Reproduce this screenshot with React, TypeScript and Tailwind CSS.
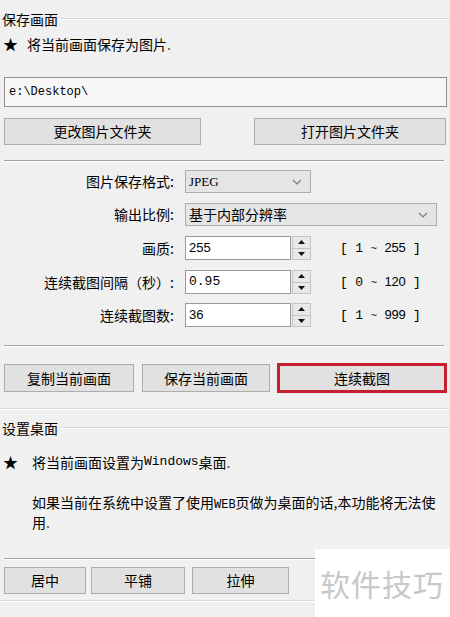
import React from "react";

const CJK = { fontFamily: '"Noto Sans CJK SC", "Noto Sans", sans-serif' };
const MONO = { fontFamily: '"Liberation Mono", "Noto Sans CJK SC", monospace' };
const SANS = { fontFamily: '"Liberation Sans", "Noto Sans CJK SC", sans-serif' };

function Btn({ children, className = "" }: { children: React.ReactNode; className?: string }) {
  return (
    <div
      className={
        "flex items-center justify-center bg-[#e1e1e1] border border-[#adadad] text-[14px] text-black " +
        className
      }
    >
      {children}
    </div>
  );
}

function Sep({ className = "" }: { className?: string }) {
  return (
    <div className={"flex flex-col " + className}>
      <div className="h-px bg-[#a0a0a0]" />
      <div className="h-px bg-white" />
    </div>
  );
}

function Chevron() {
  return (
    <svg width="10" height="6" viewBox="0 0 10 6" className="mr-[8px]">
      <path d="M1 1 L5 5 L9 1" fill="none" stroke="#7a7a7a" strokeWidth="1.2" />
    </svg>
  );
}

function Spinner() {
  return (
    <div className="flex flex-col w-[19px] h-full ml-px">
      <div className="flex-1 flex items-center justify-center bg-[#e8e8e8] border border-[#c4c4c4]">
        <svg width="7" height="4" viewBox="0 0 7 4">
          <path d="M3.5 0 L7 4 L0 4 Z" fill="#111" />
        </svg>
      </div>
      <div className="flex-1 flex items-center justify-center bg-[#e8e8e8] border border-t-0 border-[#c4c4c4]">
        <svg width="7" height="4" viewBox="0 0 7 4">
          <path d="M0 0 L7 0 L3.5 4 Z" fill="#111" />
        </svg>
      </div>
    </div>
  );
}

function Row({ label, children, className = "" }: { label: string; children: React.ReactNode; className?: string }) {
  return (
    <div className={"flex items-center " + className}>
      <div className="w-[185px] pr-[11px] text-right text-[14px] whitespace-nowrap" style={CJK}>
        {label}
      </div>
      <div className="flex items-center h-full">{children}</div>
    </div>
  );
}

function NumRow({ label, value, range, mono, className = "" }: { label: string; value: string; range: React.ReactNode; mono?: boolean; className?: string }) {
  return (
    <Row label={label} className={"h-[24px] " + className}>
      <div className="flex h-full items-stretch">
        <div
          className="w-[106px] bg-white border border-[#9a9a9a] flex items-center pl-[3px] text-[13px]"
          style={mono ? MONO : SANS}
        >
          {value}
        </div>
        <Spinner />
      </div>
      <div className="ml-[29px] text-[13px] whitespace-pre tracking-[-0.2px]" style={MONO}>
        {range}
      </div>
    </Row>
  );
}

export default function App() {
  return (
    <div className="relative w-[450px] h-[617px] bg-[#f0f0f0] overflow-hidden text-black" style={CJK}>
      {/* Group 1 header */}
      <div className="flex items-center h-[18px] mt-[10px] pl-[2px]">
        <span className="text-[14px] leading-none">保存画面</span>
        <div className="flex-1 ml-[3px] flex flex-col">
          <div className="h-px bg-[#d8d8d8]" />
          <div className="h-px bg-white" />
        </div>
      </div>
      <div className="flex items-center h-[18px] mt-[7px] pl-[3px] text-[14px]">
        <span className="text-[15px] mr-[9px]">★</span>
        <span>将当前画面保存为图片</span>
        <span className="text-[#555]">.</span>
      </div>

      <div
        className="mt-[24px] ml-[4px] w-[443px] h-[30px] border border-[#8f8f8f] bg-[#f7f7f7] flex items-center pl-[4px] text-[12px]"
        style={MONO}
      >
        e:\Desktop\
      </div>

      <div className="mt-[11px] flex h-[27px]">
        <Btn className="ml-[4px] w-[197px]">更改图片文件夹</Btn>
        <Btn className="ml-[53px] w-[192px]">打开图片文件夹</Btn>
      </div>

      <Sep className="mt-[15px] ml-[4px] w-[440px]" />

      <Row label="图片保存格式:" className="h-[23px] mt-[8px]">
        <div className="w-[126px] h-[23px] bg-[#e5e5e5] border border-[#adadad] flex items-center justify-between pl-[3px] text-[13px]">
          <span style={{ fontFamily: '"Liberation Serif", serif' }}>JPEG</span>
          <Chevron />
        </div>
      </Row>
      <Row label="输出比例:" className="h-[23px] mt-[10px]">
        <div className="w-[252px] h-[23px] bg-[#e5e5e5] border border-[#adadad] flex items-center justify-between pl-[3px] text-[14px]">
          <span>基于内部分辨率</span>
          <Chevron />
        </div>
      </Row>
      <NumRow label="画质:" value="255" className="mt-[10px]" range={<>[ 1 <span className="text-[11px]">~</span> <span style={SANS}>255</span> ]</>} />
      <NumRow label="连续截图间隔（秒）:" value="0.95" mono className="mt-[10px]" range={<>[ 0 <span className="text-[11px]">~</span> <span style={SANS}>120</span> ]</>} />
      <NumRow label="连续截图数:" value="36" className="mt-[9px]" range={<>[ 1 <span className="text-[11px]">~</span> <span style={SANS}>999</span> ]</>} />

      <Sep className="mt-[18px] ml-[4px] w-[440px]" />

      <div className="mt-[16px] flex items-center h-[30px]">
        <Btn className="ml-[4px] w-[130px] h-[28px]">复制当前画面</Btn>
        <Btn className="ml-[8px] w-[128px] h-[28px]">保存当前画面</Btn>
        <Btn className="ml-[7px] w-[170px] h-[30px] border-[3px] border-[#c4202f]">连续截图</Btn>
      </div>

      <div className="mt-[15px] flex flex-col">
        <div className="h-px bg-[#dcdcdc]" />
        <div className="h-px bg-white" />
      </div>

      {/* Group 2 header */}
      <div className="flex items-center h-[18px] mt-[9px] pl-[2px]">
        <span className="text-[14px] leading-none">设置桌面</span>
        <div className="flex-1 ml-[3px] flex flex-col">
          <div className="h-px bg-[#d8d8d8]" />
          <div className="h-px bg-white" />
        </div>
      </div>
      <div className="flex items-center h-[18px] mt-[16px] pl-[3px] text-[14px]">
        <span className="text-[15px] w-[29px]">★</span>
        <span>将当前画面设置为</span>
        <span className="text-[13px]" style={MONO}>Windows</span>
        <span>桌面</span>
        <span className="text-[#555]">.</span>
      </div>

      <div className="mt-[23px] pl-[32px] text-[14px] leading-[17px] whitespace-nowrap">
        如果当前在系统中设置了使用<span className="text-[12px]" style={MONO}>WEB</span>页做为桌面的话,本功能将无法使
        <br />
        用<span className="text-[#555]">.</span>
      </div>

      <Sep className="mt-[27px] ml-[4px] w-[440px]" />

      <div className="mt-[7px] flex h-[27px]">
        <Btn className="ml-[4px] w-[82px]">居中</Btn>
        <Btn className="ml-[5px] w-[94px]">平铺</Btn>
        <Btn className="ml-[7px] w-[97px]">拉伸</Btn>
      </div>

      <div className="mt-[6px] flex flex-col">
        <div className="h-px bg-[#dcdcdc]" />
        <div className="h-px bg-white" />
      </div>

      {/* watermark */}
      <div className="absolute left-[315px] top-[549px] w-[135px] h-[68px] bg-white flex items-center pl-[5px]">
        <span className="text-[30px] text-[#c8c8c8] tracking-[1px]">软件技巧</span>
      </div>
    </div>
  );
}
